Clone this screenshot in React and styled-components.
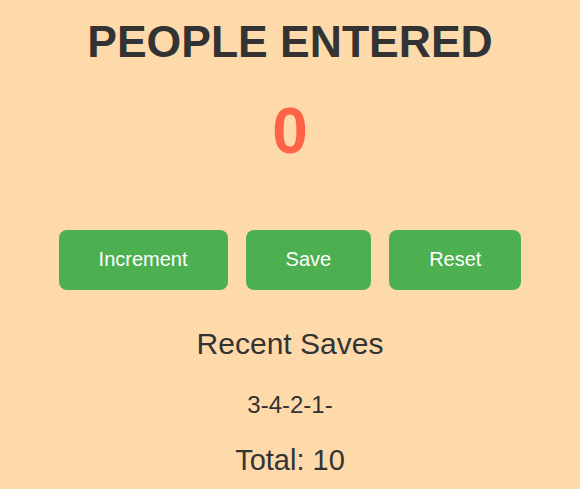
import styled, { createGlobalStyle } from 'styled-components';

const GlobalStyle = createGlobalStyle`
  html, body {
    margin: 0;
    padding: 0;
    background: #fedaab;
  }
  body {
    font-family: "Liberation Sans", Arial, sans-serif;
    color: #333333;
  }
`;

const Page = styled.main`
  min-height: 100vh;
  display: flex;
  flex-direction: column;
  align-items: center;
  padding-top: 16px;
  box-sizing: border-box;
  text-align: center;
`;

const Title = styled.h1`
  margin: 0;
  font-size: 44.5px;
  line-height: 1.15;
  font-weight: bold;
  color: #333333;
`;

const Count = styled.h2`
  margin: 28px 0 0;
  font-size: 64px;
  line-height: 1.15;
  font-weight: bold;
  color: #ff6347;
`;

const Buttons = styled.div`
  display: flex;
  justify-content: center;
  gap: 18px;
  margin-top: 61px;
`;

const Button = styled.button`
  height: 60px;
  padding: 0 40px;
  border: none;
  border-radius: 8px;
  background: #4caf50;
  color: #ffffff;
  font-family: "Liberation Sans", Arial, sans-serif;
  font-size: 20px;
  cursor: pointer;

  &:hover {
    background: #45a049;
  }
`;

const SavesTitle = styled.h3`
  margin: 37px 0 0;
  font-size: 30px;
  line-height: 1.15;
  font-weight: normal;
`;

const SavesList = styled.p`
  margin: 30px 0 0;
  font-size: 24px;
  line-height: 1.15;
`;

const Total = styled.p`
  margin: 25px 0 0;
  font-size: 29px;
  line-height: 1.15;
`;

const App = () => {
  const saves = [3, 4, 2, 1];
  const total = saves.reduce((a, b) => a + b, 0);

  return (
    <>
      <GlobalStyle />
      <Page>
        <Title>PEOPLE ENTERED</Title>
        <Count>0</Count>
        <Buttons>
          <Button>Increment</Button>
          <Button>Save</Button>
          <Button>Reset</Button>
        </Buttons>
        <SavesTitle>Recent Saves</SavesTitle>
        <SavesList>{saves.map((n) => `${n}-`).join('')}</SavesList>
        <Total>Total: {total}</Total>
      </Page>
    </>
  );
};

export default App;
